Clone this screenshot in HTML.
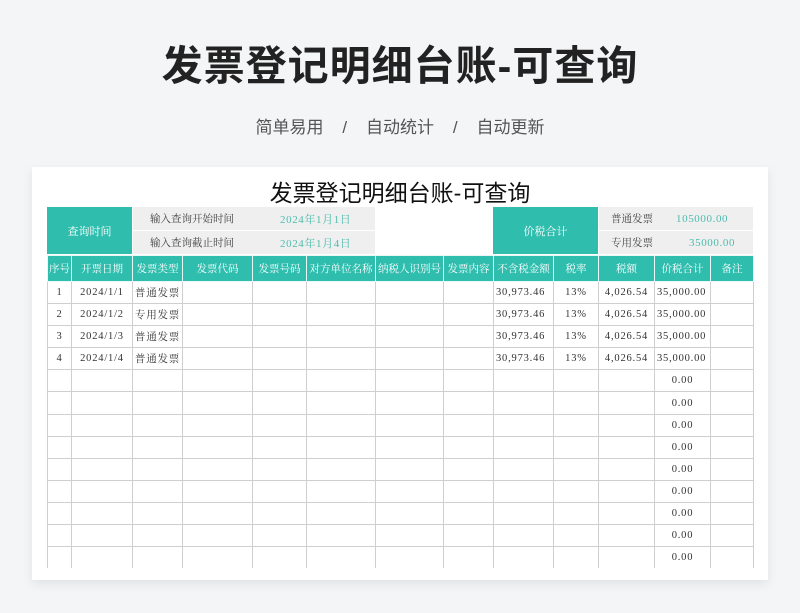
<!DOCTYPE html>
<html><head><meta charset="utf-8"><style>
*{margin:0;padding:0;box-sizing:border-box}
body{width:800px;height:613px;background:#f3f5f7;position:relative;overflow:hidden;font-family:"Liberation Serif","Noto Serif CJK SC",serif}
.t1{position:absolute;top:32px;left:0;width:800px;text-align:center;font:bold 41px "Liberation Sans","Noto Sans CJK SC",sans-serif;color:#222;letter-spacing:1px}
.t2{position:absolute;top:113px;left:0;width:800px;text-align:center;font:17px "Liberation Sans","Noto Sans CJK SC",sans-serif;color:#555;word-spacing:0}
.card{position:absolute;left:32px;top:167px;width:736px;height:413px;background:#fff;box-shadow:0 4px 10px rgba(0,0,0,.08)}
.ct{position:absolute;left:0;top:7px;width:736px;text-align:center;font:23px "Liberation Sans","Noto Sans CJK SC",sans-serif;color:#111}
.a{position:absolute;font-size:10.5px;display:flex;align-items:center}
.teal{background:#2fbdad;color:#fff;justify-content:center;font-size:11px}
.gray{background:#efefef;color:#444}
.g{color:#4cbcae;font-size:11px;letter-spacing:.6px}
table{position:absolute;left:47px;top:255px;border-collapse:collapse;table-layout:fixed}
td{border:1px solid #cfcfcf;height:22.1px;font-size:10.5px;color:#333;text-align:center;white-space:nowrap;overflow:hidden;padding:0;letter-spacing:.8px}
tr.h td{background:#2fbdad;color:#fff;height:26px;border-color:#e6f7f5;font-size:10.5px;letter-spacing:0}
td.l{text-align:left;padding-left:2px}
.wrap{position:absolute;left:0;top:0;width:800px;height:568px;overflow:hidden}
</style></head><body>
<div class="t1">发票登记明细台账-可查询</div>
<div class="t2">简单易用 &nbsp; &nbsp;/ &nbsp; &nbsp;自动统计 &nbsp; &nbsp;/ &nbsp; &nbsp;自动更新</div>
<div class="card"><div class="ct">发票登记明细台账-可查询</div></div>
<div class="a teal" style="left:47px;top:207px;width:85px;height:47px">查询时间</div>
<div class="a gray" style="left:133px;top:207px;width:242px;height:23px"><span style="margin-left:17px;width:130px">输入查询开始时间</span><span class="g">2024年1月1日</span></div>
<div class="a gray" style="left:133px;top:231px;width:242px;height:23px"><span style="margin-left:17px;width:130px">输入查询截止时间</span><span class="g">2024年1月4日</span></div>
<div class="a teal" style="left:493px;top:207px;width:105px;height:47px">价税合计</div>
<div class="a gray" style="left:599px;top:207px;width:154px;height:23px"><span style="margin-left:12px;width:65px">普通发票</span><span class="g">105000.00</span></div>
<div class="a gray" style="left:599px;top:231px;width:154px;height:23px"><span style="margin-left:12px;width:78px">专用发票</span><span class="g">35000.00</span></div>
<div class="wrap">
<table>
<colgroup><col style="width:24px"><col style="width:61px"><col style="width:50px"><col style="width:70px"><col style="width:54px"><col style="width:69px"><col style="width:68px"><col style="width:50px"><col style="width:60px"><col style="width:45px"><col style="width:56px"><col style="width:56px"><col style="width:43px"></colgroup>
<tr class="h"><td>序号</td><td>开票日期</td><td>发票类型</td><td>发票代码</td><td>发票号码</td><td>对方单位名称</td><td>纳税人识别号</td><td>发票内容</td><td>不含税金额</td><td>税率</td><td>税额</td><td>价税合计</td><td>备注</td></tr>
<tr><td>1</td><td>2024/1/1</td><td>普通发票</td><td></td><td></td><td></td><td></td><td></td><td class="l">30,973.46</td><td>13%</td><td>4,026.54</td><td class="l">35,000.00</td><td></td></tr>
<tr><td>2</td><td>2024/1/2</td><td>专用发票</td><td></td><td></td><td></td><td></td><td></td><td class="l">30,973.46</td><td>13%</td><td>4,026.54</td><td class="l">35,000.00</td><td></td></tr>
<tr><td>3</td><td>2024/1/3</td><td>普通发票</td><td></td><td></td><td></td><td></td><td></td><td class="l">30,973.46</td><td>13%</td><td>4,026.54</td><td class="l">35,000.00</td><td></td></tr>
<tr><td>4</td><td>2024/1/4</td><td>普通发票</td><td></td><td></td><td></td><td></td><td></td><td class="l">30,973.46</td><td>13%</td><td>4,026.54</td><td class="l">35,000.00</td><td></td></tr>
<tr><td></td><td></td><td></td><td></td><td></td><td></td><td></td><td></td><td></td><td></td><td></td><td>0.00</td><td></td></tr>
<tr><td></td><td></td><td></td><td></td><td></td><td></td><td></td><td></td><td></td><td></td><td></td><td>0.00</td><td></td></tr>
<tr><td></td><td></td><td></td><td></td><td></td><td></td><td></td><td></td><td></td><td></td><td></td><td>0.00</td><td></td></tr>
<tr><td></td><td></td><td></td><td></td><td></td><td></td><td></td><td></td><td></td><td></td><td></td><td>0.00</td><td></td></tr>
<tr><td></td><td></td><td></td><td></td><td></td><td></td><td></td><td></td><td></td><td></td><td></td><td>0.00</td><td></td></tr>
<tr><td></td><td></td><td></td><td></td><td></td><td></td><td></td><td></td><td></td><td></td><td></td><td>0.00</td><td></td></tr>
<tr><td></td><td></td><td></td><td></td><td></td><td></td><td></td><td></td><td></td><td></td><td></td><td>0.00</td><td></td></tr>
<tr><td></td><td></td><td></td><td></td><td></td><td></td><td></td><td></td><td></td><td></td><td></td><td>0.00</td><td></td></tr>
<tr><td></td><td></td><td></td><td></td><td></td><td></td><td></td><td></td><td></td><td></td><td></td><td>0.00</td><td></td></tr>
</table>
</div>
</body></html>
